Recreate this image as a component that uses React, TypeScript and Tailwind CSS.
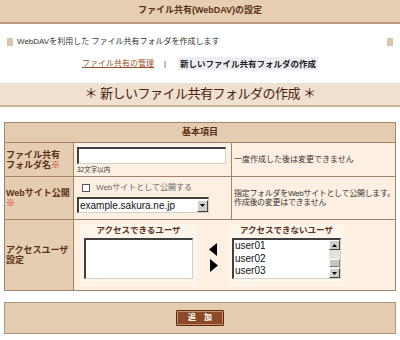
import React from "react";

const BR = "border-[#a3846a]";

function Label({ children }: { children: React.ReactNode }) {
  return (
    <div className={`bg-[#e5cdb1] border-r ${BR} px-[1px] flex items-center text-[9px] leading-[10px] font-bold text-[#5a3218]`}>
      <div>{children}</div>
    </div>
  );
}

function Arrow({ dir }: { dir: "l" | "r" }) {
  return (
    <svg width="9" height="13" viewBox="0 0 9 13">
      {dir === "l" ? <polygon points="8,0 8,13 0,6.5" fill="#000" /> : <polygon points="1,0 1,13 9,6.5" fill="#000" />}
    </svg>
  );
}

export default function App() {
  return (
    <div className="w-[400px] h-[340px] bg-white overflow-hidden text-[#333] font-['Liberation_Sans','Noto_Sans_CJK_JP',sans-serif]">
      {/* title bar */}
      <div className="h-[24px] bg-[#e6ceb2] border-b-2 border-[#b99a7e] flex items-center justify-center text-[9px] font-bold text-[#5a3218]">
        ファイル共有(WebDAV)の設定
      </div>

      {/* description */}
      <div className="mt-[13px] h-[10px] px-[7px] flex items-center justify-between">
        <div className="flex items-center gap-[4px]">
          <span className="w-[6px] h-[8px] bg-[#dac4a8]" />
          <span className="text-[8px] leading-[10px] text-[#333] whitespace-nowrap">WebDAVを利用した ファイル共有フォルダを作成します</span>
        </div>
        <span className="w-[6px] h-[8px] bg-[#dac4a8]" />
      </div>

      {/* nav */}
      <div className="mt-[10px] h-[13px] flex items-center justify-center text-[8px] leading-[10px]">
        <span className="text-[#9a4f26] underline decoration-[#9a4f26] whitespace-nowrap">ファイル共有の管理</span>
        <span className="ml-[10px] mr-[12px] text-[#333]">|</span>
        <span className="bg-[#eeedf3] px-[2px] h-[13px] flex items-center font-bold text-[#222] text-[8.5px] whitespace-nowrap">新しいファイル共有フォルダの作成</span>
      </div>

      {/* big heading */}
      <div className="mt-[13px] h-[24px] bg-[#f0e1cf] border-b-2 border-[#ccb295] flex items-center justify-center text-[13px] leading-[16px] tracking-[-0.5px] text-[#4a2010] whitespace-nowrap">
        ＊ 新しいファイル共有フォルダの作成 ＊
      </div>

      {/* table */}
      <div className={`mx-[4px] mt-[15px] border ${BR} bg-[#fdf0e2]`}>
        <div className="h-[19px] bg-[#e4ccb0] flex items-center justify-center text-[9px] font-bold text-[#5a3218]">
          基本項目
        </div>

        {/* row 1 */}
        <div className={`grid grid-cols-[69px_158px_1fr] h-[34px] border-t ${BR}`}>
          <Label>
            ファイル共有
            <br />
            フォルダ名<span className="text-[#e0202a]">※</span>
          </Label>
          <div className={`border-r ${BR} pl-[3px] pt-[4px] flex flex-col`}>
            <div className="w-[149px] h-[17px] bg-white border-t-2 border-l-2 border-[#404040] border-r border-b border-r-[#d4d0c8] border-b-[#d4d0c8]" />
            <span className="mt-[2px] text-[6.5px] leading-[8px] text-[#333]">32文字以内</span>
          </div>
          <div className="pl-[2px] flex items-center text-[8px] text-[#333] whitespace-nowrap">一度作成した後は変更できません</div>
        </div>

        {/* row 2 */}
        <div className={`grid grid-cols-[69px_158px_1fr] h-[43px] border-t ${BR}`}>
          <Label>
            Webサイト公開
            <br />
            <span className="text-[#e0202a]">※</span>
          </Label>
          <div className={`border-r ${BR} pl-[3px] pt-[6px] flex flex-col`}>
            <div className="flex items-center ml-[5px] h-[10px]">
              <span className="w-[8px] h-[8px] bg-white border border-[#555]" />
              <span className="ml-[6px] text-[8px] leading-[10px] text-[#666] whitespace-nowrap">Webサイトとして公開する</span>
            </div>
            <div className="mt-[4px] w-[132px] h-[16px] bg-white border-t-2 border-l-2 border-[#404040] border-r border-b border-r-[#d4d0c8] border-b-[#d4d0c8] flex items-center">
              <span className="flex-1 pl-[1px] text-[10px] leading-[12px] text-[#111] font-['Liberation_Sans',sans-serif]">example.sakura.ne.jp</span>
              <span className="w-[11px] h-[12px] bg-[#d4d0c8] border border-t-white border-l-white border-r-[#404040] border-b-[#404040] flex items-center justify-center">
                <svg width="5" height="3" viewBox="0 0 5 3"><polygon points="0,0 5,0 2.5,3" fill="#000" /></svg>
              </span>
            </div>
          </div>
          <div className="pl-[2px] flex flex-col justify-center text-[8px] leading-[9.5px] tracking-[-0.3px] text-[#333] whitespace-nowrap">
            <span>指定フォルダをWebサイトとして公開します。</span>
            <span>作成後の変更はできません</span>
          </div>
        </div>

        {/* row 3 */}
        <div className={`grid grid-cols-[69px_1fr] h-[71px] border-t ${BR}`}>
          <Label>
            アクセスユーザ
            <br />
            設定
          </Label>
          <div className="flex items-start pl-[6px] pt-[4px]">
            <div className="w-[117px] h-[62px] bg-[#fdf4ea] flex flex-col items-center">
              <span className="text-[8.5px] leading-[11px] font-bold text-[#5a3218] mt-[1px] whitespace-nowrap">アクセスできるユーザ</span>
              <div className="mt-[2px] w-[109px] h-[41px] bg-white border-t-2 border-l-2 border-[#404040] border-r border-b border-r-[#d4d0c8] border-b-[#d4d0c8]" />
            </div>
            <div className="w-[32px] flex flex-col items-center pt-[19px] gap-[3px]">
              <Arrow dir="l" />
              <Arrow dir="r" />
            </div>
            <div className="w-[115px] h-[62px] bg-[#fdf4ea] flex flex-col items-center">
              <span className="text-[8.5px] leading-[11px] font-bold text-[#5a3218] mt-[1px] whitespace-nowrap">アクセスできないユーザ</span>
              <div className="mt-[2px] w-[109px] h-[41px] bg-white border-t-2 border-l-2 border-[#404040] border-r border-b border-r-[#d4d0c8] border-b-[#d4d0c8] flex">
                <div className="flex-1 pl-[1px] flex flex-col text-[10px] leading-[12.5px] text-[#111] font-['Liberation_Sans',sans-serif]">
                  <span>user01</span>
                  <span>user02</span>
                  <span>user03</span>
                </div>
                <div className="w-[11px] flex flex-col bg-[#ece9e3]">
                  <span className="h-[10px] bg-[#d4d0c8] border border-t-white border-l-white border-r-[#404040] border-b-[#404040] flex items-center justify-center">
                    <svg width="5" height="3" viewBox="0 0 5 3"><polygon points="0,3 5,3 2.5,0" fill="#000" /></svg>
                  </span>
                  <span className="h-[9px] bg-[#e4e2de]" />
                  <span className="h-[8px] bg-[#c8c5bf] border border-t-white border-l-white border-r-[#808080] border-b-[#808080]" />
                  <span className="flex-1" />
                  <span className="h-[10px] bg-[#d4d0c8] border border-t-white border-l-white border-r-[#404040] border-b-[#404040] flex items-center justify-center">
                    <svg width="5" height="3" viewBox="0 0 5 3"><polygon points="0,0 5,0 2.5,3" fill="#000" /></svg>
                  </span>
                </div>
              </div>
            </div>
          </div>
        </div>
      </div>

      {/* footer */}
      <div className="mx-[4px] mt-[11px] h-[32px] bg-[#e4ccb0] border border-[#b39577] flex items-center justify-center">
        <button className="w-[48px] h-[16px] bg-[#8c4a28] border border-[#5a2a10] shadow-[inset_0_0_0_1px_#c8906a] rounded-[1px] flex items-center justify-center text-[8px] font-bold text-white leading-none">
          追　加
        </button>
      </div>
    </div>
  );
}
